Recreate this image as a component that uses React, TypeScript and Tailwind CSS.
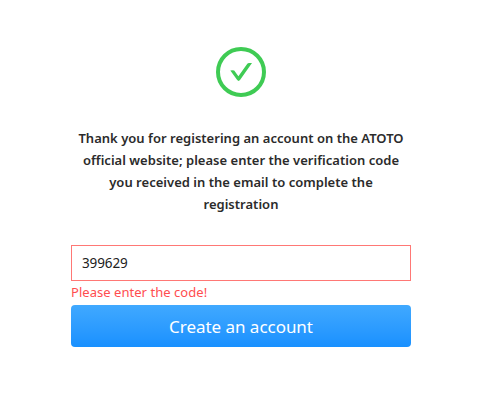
import React, { useState } from "react";

const SuccessIcon: React.FC = () => (
  <svg width="50" height="50" viewBox="0 0 50 50" fill="none">
    <circle cx="25" cy="25" r="23" stroke="#3fcb54" strokeWidth="4" />
    <path
      d="M14.3 23.6 Q16.5 22.8 18.2 23.6 L22.4 29.3 L31.3 16.7 Q32 16 33 16 L36 16 L24.2 32.8 Q22.6 35 21 32.8 Z"
      fill="#3fcb54"
    />
  </svg>
);

export default function App() {
  const [code, setCode] = useState("399629");

  return (
    <div className="flex h-[400px] w-[490px] justify-center bg-white pr-2 font-['Noto_Sans',sans-serif]">
      <div className="flex w-[340px] flex-col items-center pt-[47px]">
        <SuccessIcon />

        <p className="mt-[30px] text-center text-[13px] leading-[22px] font-semibold tracking-[0.02px] whitespace-nowrap text-[#2b2b2b]">
          Thank you for registering an account on the ATOTO
          <br />
          official website; please enter the verification code
          <br />
          you received in the email to complete the
          <br />
          registration
        </p>

        <input
          value={code}
          onChange={(e) => setCode(e.target.value)}
          className="mt-[30px] h-9 w-full border border-[#ff7875] px-2.5 text-[13.5px] tracking-[-0.1px] text-[#222] outline-none"
        />
        <div className="h-6 w-full text-[13px] leading-[23px] tracking-[0.04px] text-[#ff4d4f]">
          Please enter the code!
        </div>

        <button className="h-[42px] w-full rounded-[4px] bg-linear-to-b from-[#40a9ff] to-[#1890ff] pt-px text-[17px] tracking-[-0.03px] text-white">
          Create an account
        </button>
      </div>
    </div>
  );
}
